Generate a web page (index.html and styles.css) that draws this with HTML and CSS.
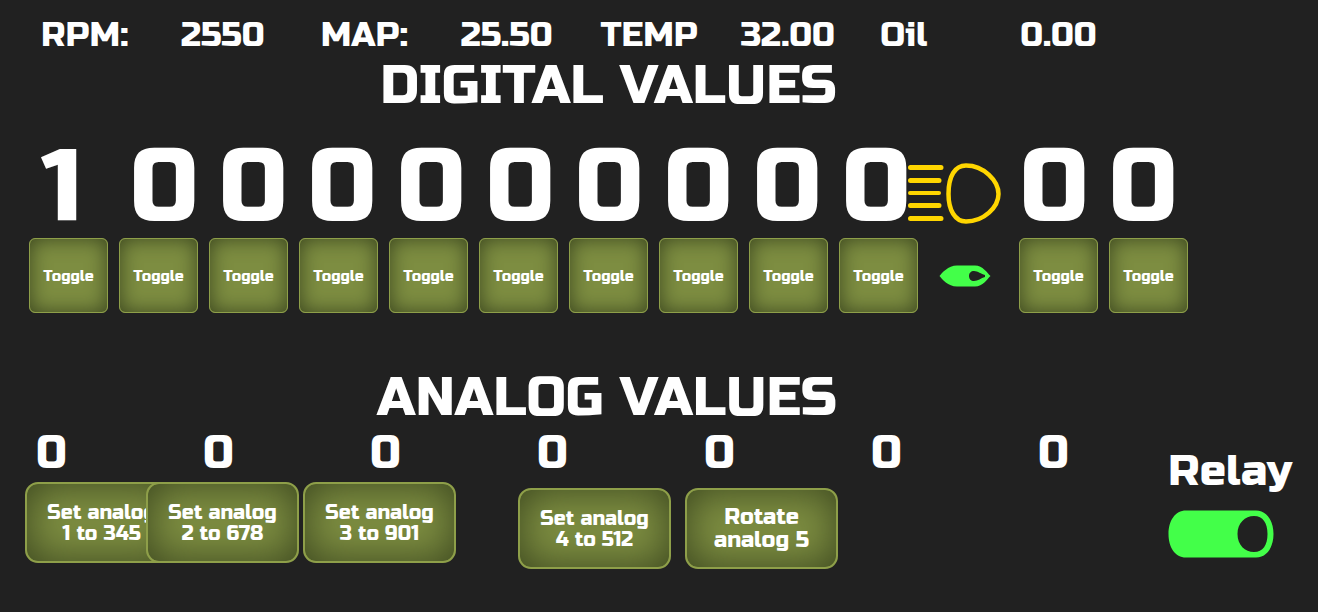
FILE: index.html
```html
<!DOCTYPE html>
<html lang="en">
<head>
<meta charset="utf-8">
<meta name="viewport" content="width=device-width, initial-scale=1">
<title>Dashboard</title>
<link rel="stylesheet" href="styles.css">
</head>
<body>
<header class="readings">
  <span>RPM:</span><span>2550</span>
  <span>MAP:</span><span>25.50</span>
  <span>TEMP</span><span>32.00</span>
  <span>Oil</span><span>0.00</span>
</header>
<main>
  <section class="digital">
    <h1 class="title">DIGITAL VALUES</h1>
    <div class="digits">
      <span>1</span><span>0</span><span>0</span><span>0</span><span>0</span><span>0</span><span>0</span><span>0</span><span>0</span><span>0</span>
      <svg class="beam" viewBox="0 0 94 62" role="img" aria-label="High beam">
        <g fill="none" stroke="#ffd600" stroke-linecap="round">
          <path stroke-width="5" d="M3.500 5.500H34M3.500 18.500H32M3.500 43.500H32M3.500 56.500H34"/>
          <path stroke-width="4" d="M3 31H32"/>
          <path stroke-width="4.500" d="M59 3.500C48 3.500 41.500 14 41.500 32C41.500 48 48 59.500 59 59.500C77 59.500 91.500 45 91.500 32C91.500 19 77 3.500 59 3.500Z"/>
        </g>
      </svg>
      <span>0</span><span>0</span>
    </div>
    <div class="toggles">
      <button class="key" type="button">Toggle</button>
      <button class="key" type="button">Toggle</button>
      <button class="key" type="button">Toggle</button>
      <button class="key" type="button">Toggle</button>
      <button class="key" type="button">Toggle</button>
      <button class="key" type="button">Toggle</button>
      <button class="key" type="button">Toggle</button>
      <button class="key" type="button">Toggle</button>
      <button class="key" type="button">Toggle</button>
      <button class="key" type="button">Toggle</button>
      <label class="switch switch-small">
        <input type="checkbox" checked aria-label="High beam">
        <svg viewBox="0 0 52 24" aria-hidden="true"><path fill="#43ff49" fill-rule="evenodd" d="M0.500 12C3 9 9 1.500 18 1.500H36C44 1.500 48 9 51.500 12C48 15 44 22.500 36 22.500H18C9 22.500 3 15 0.500 12ZM30 12C30 15 32 17 35 17C39 17 42 14 46 13V11C42 10 39 7 35 7C32 7 30 9 30 12Z"/></svg>
      </label>
      <button class="key" type="button">Toggle</button>
      <button class="key" type="button">Toggle</button>
    </div>
  </section>
  <div class="lower">
    <section class="analog">
      <h2 class="title">ANALOG VALUES</h2>
      <div class="levels">
        <span>0</span><span>0</span><span>0</span><span>0</span><span>0</span><span>0</span><span>0</span>
      </div>
      <div class="actions">
        <div class="group group-set">
          <button class="action" type="button">Set analog<br>1 to 345</button>
          <button class="action overlap" type="button">Set analog<br>2 to 678</button>
          <button class="action" type="button">Set analog<br>3 to 901</button>
        </div>
        <div class="group group-last">
          <button class="action" type="button">Set analog<br>4 to 512</button>
          <button class="action rotate" type="button">Rotate<br>analog 5</button>
        </div>
      </div>
    </section>
    <section class="relay">
      <label class="relay-label" for="relay">Relay</label>
      <div class="switch switch-large">
        <input id="relay" type="checkbox" checked>
        <svg viewBox="0 0 106 48" aria-hidden="true"><path fill="#43ff49" fill-rule="evenodd" d="M18 0.500H88C99 0.500 105.500 11 105.500 24C105.500 37 99 47.500 88 47.500H18C7 47.500 0.500 37 0.500 24C0.500 11 7 0.500 18 0.500ZM69.500 24C69.500 35 77 42 86 42C95 42 99.500 35 99.500 24C99.500 13 95 6 86 6C77 6 69.500 13 69.500 24Z"/></svg>
      </div>
    </section>
  </div>
</main>
</body>
</html>
```
FILE: styles.css
```css
* {
  box-sizing: border-box;
}

body {
  margin: 0;
  background: #212121;
  color: #fff;
  font-family: "Russo One", Inter, "Open Sans", sans-serif;
  font-weight: 400;
}

.readings {
  display: grid;
  grid-template-columns: repeat(8, 1fr);
  padding: 15px 158px 0 41px;
  font-size: 34px;
  line-height: 40px;
}

.title {
  margin: 0;
  text-align: center;
  font-size: 54px;
  font-weight: 400;
  line-height: 60px;
}

.digital {
  padding: 1px 130px 0 29px;
}

.digits {
  display: grid;
  grid-template-columns: repeat(13, 1fr);
  align-items: center;
  margin: 21px -10px 0 12px;
  font-size: 102px;
  line-height: 100px;
}

.beam {
  width: 94px;
  margin: 12px 0 0 -24px;
}

.toggles {
  display: grid;
  grid-template-columns: repeat(13, 1fr);
  gap: 11px;
  margin-top: 1px;
}

.key,
.action {
  padding: 0;
  background: #7d8d41;
  color: #fff;
  font: inherit;
  text-align: center;
}

.key {
  height: 75px;
  border: 1px solid #8e9f49;
  border-radius: 6px;
  box-shadow: inset 0 0 20px #3a451e;
  font-size: 15px;
}

.switch {
  display: grid;
  place-items: center;
}

.switch > * {
  grid-area: 1 / 1;
}

.switch input {
  width: 100%;
  height: 100%;
  margin: 0;
  opacity: 0;
}

.switch-small {
  padding-right: 8px;
}

.switch-small svg {
  width: 52px;
}

.switch-large svg,
.switch-large {
  width: 106px;
}

.lower {
  display: grid;
  grid-template-columns: 1fr 150px;
  margin-top: 55px;
}

.analog .title {
  padding-left: 46px;
}

.levels {
  display: flex;
  justify-content: space-between;
  padding: 0 99px 0 36px;
  font-size: 46px;
  line-height: 50px;
}

.actions {
  display: flex;
  gap: 62px;
  padding: 4px 0 0 25px;
}

.group {
  display: flex;
}

.group-set {
  gap: 4px;
}

.group-last {
  gap: 14px;
  padding-top: 6px;
}

.action {
  width: 153px;
  height: 81px;
  border: 2px solid #8e9f49;
  border-radius: 13px;
  box-shadow: inset 0 0 40px #3a451e;
  font-size: 20px;
  line-height: 21px;
}

.overlap {
  margin-left: -36px;
}

.rotate {
  font-size: 22px;
  line-height: 23px;
}

.relay {
  padding-top: 77px;
}

.relay-label {
  display: block;
  margin-bottom: 13px;
  font-size: 44px;
  line-height: 52px;
}
```
